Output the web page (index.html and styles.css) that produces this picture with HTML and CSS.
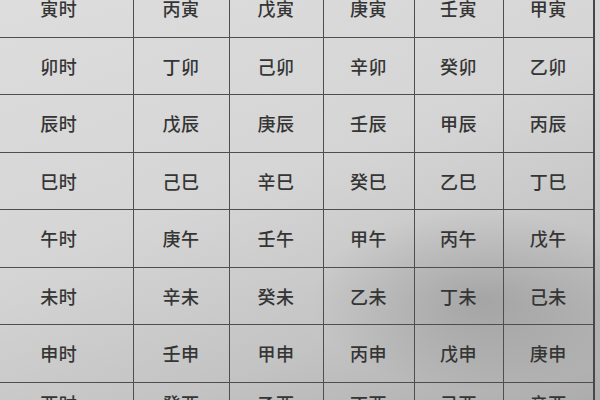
FILE: index.html
```html
<!DOCTYPE html>
<html lang="zh">
<head>
<meta charset="utf-8">
<link rel="stylesheet" href="styles.css">
</head>
<body>
<div class="sheet">
<table class="tbl">
<colgroup>
<col class="c0"><col class="c1"><col class="c2"><col class="c3"><col class="c4"><col class="c5">
</colgroup>
<tbody>
<tr><td>寅时</td><td>丙寅</td><td>戊寅</td><td>庚寅</td><td>壬寅</td><td>甲寅</td></tr>
<tr><td>卯时</td><td>丁卯</td><td>己卯</td><td>辛卯</td><td>癸卯</td><td>乙卯</td></tr>
<tr><td>辰时</td><td>戊辰</td><td>庚辰</td><td>壬辰</td><td>甲辰</td><td>丙辰</td></tr>
<tr><td>巳时</td><td>己巳</td><td>辛巳</td><td>癸巳</td><td>乙巳</td><td>丁巳</td></tr>
<tr><td>午时</td><td>庚午</td><td>壬午</td><td>甲午</td><td>丙午</td><td>戊午</td></tr>
<tr><td>未时</td><td>辛未</td><td>癸未</td><td>乙未</td><td>丁未</td><td>己未</td></tr>
<tr><td>申时</td><td>壬申</td><td>甲申</td><td>丙申</td><td>戊申</td><td>庚申</td></tr>
<tr><td>酉时</td><td>癸酉</td><td>乙酉</td><td>丁酉</td><td>己酉</td><td>辛酉</td></tr>
</tbody>
</table>
</div>
</body>
</html>
```
FILE: styles.css
```css
html, body {
  margin: 0;
  padding: 0;
  width: 600px;
  height: 400px;
  overflow: hidden;
}
body {
  background:
    radial-gradient(ellipse 240px 130px at 480px 300px, rgba(50,50,50,0.2), rgba(50,50,50,0) 70%),
    linear-gradient(160deg, #dddddd 0%, #d5d5d5 45%, #c3c3c3 75%, #acacac 100%);
  font-family: "Noto Sans CJK SC", "Noto Sans", sans-serif;
}
.sheet {
  margin-top: -20px;
  margin-left: -15px;
}
.tbl {
  border-collapse: collapse;
  table-layout: fixed;
  width: 609px;
}
.c0 { width: 148px; }
.c1 { width: 96px; }
.c2 { width: 94px; }
.c3 { width: 91px; }
.c4 { width: 89px; }
.c5 { width: 91px; }
.tbl td {
  height: 56.5px;
  padding: 0;
  text-align: center;
  vertical-align: middle;
  font-size: 18px;
  font-weight: 500;
  line-height: 20px;
  color: #353535;
  border-left: 1.5px solid #4e4e4e;
  border-bottom: 1.5px solid #4e4e4e;
  letter-spacing: 0.5px;
}
.tbl td:first-child {
  border-left: none;
}
.tbl td:last-child {
  border-right: 2px solid #484848;
}
.tbl tr:last-child td {
  vertical-align: top;
  padding-top: 10px;
}
```
